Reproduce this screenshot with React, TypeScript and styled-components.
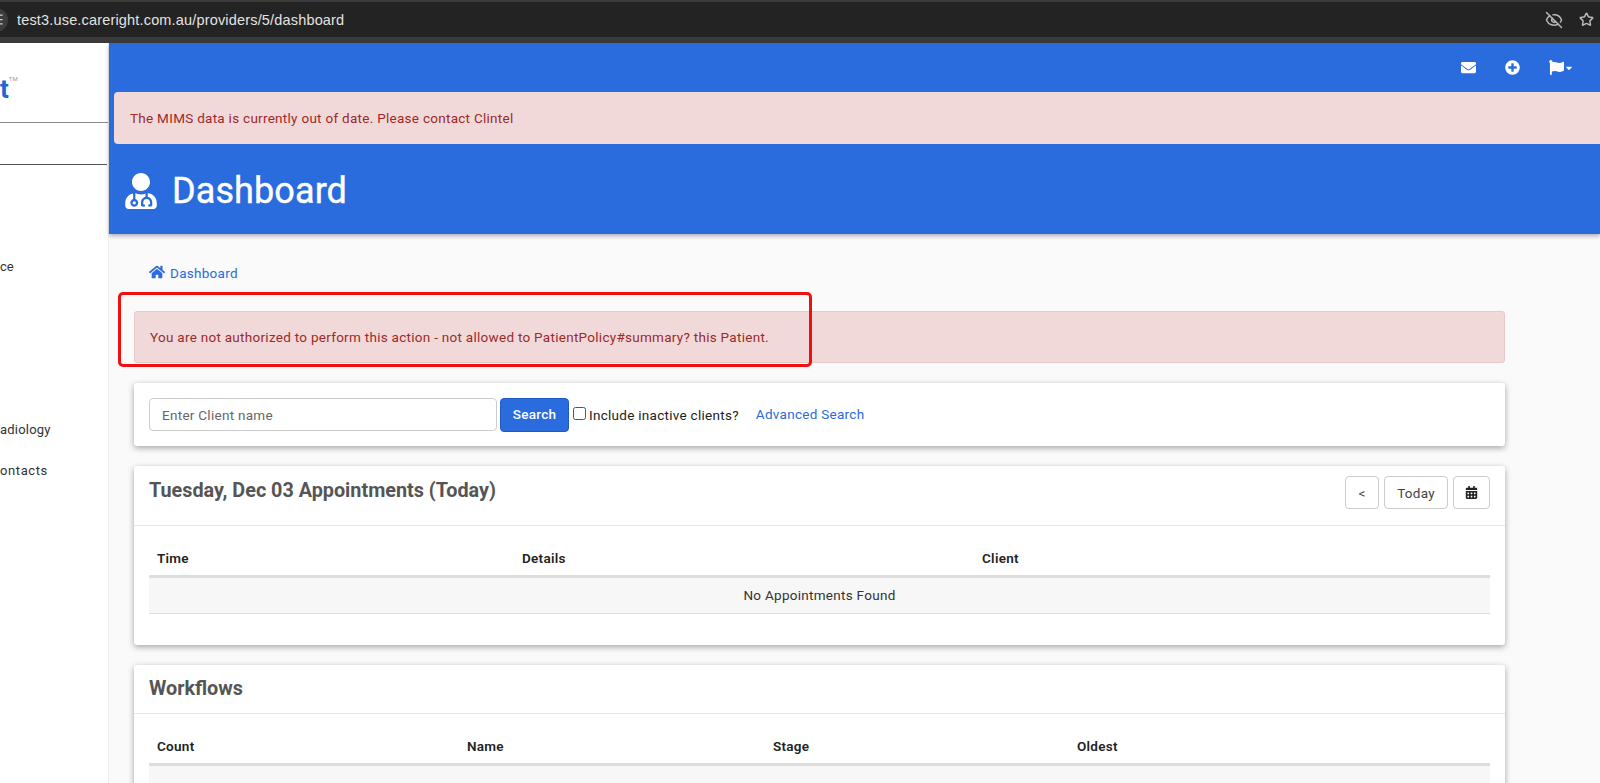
import React from "react";
import styled, { createGlobalStyle } from "styled-components";
import { FaUserMd, FaHome, FaPlusCircle, FaEnvelope, FaFlag, FaCalendarAlt, FaCaretDown } from "react-icons/fa";
import { EyeOff, Star, SlidersHorizontal } from "lucide-react";

const Global = createGlobalStyle`
  html, body { margin: 0; padding: 0; background: #fafafa; overflow: hidden; }
  * { box-sizing: border-box; }
`;

const Page = styled.div`
  width: 1600px; height: 783px; overflow: hidden; display: flex; flex-direction: column;
  font-family: Roboto, "Liberation Sans", sans-serif; font-size: 13.5px; letter-spacing: 0.28px; color: #222;
`;

const BrowserBar = styled.div`
  height: 43px; flex: none; display: flex; align-items: center; justify-content: space-between;
  background: #232323; border-top: 2px solid #3a3a3a; border-bottom: 6px solid #3a3a3a;
  color: #dcdcdc; padding-right: 6px;
`;
const UrlGroup = styled.div`display: flex; align-items: center; gap: 9px; margin-left: -16px;`;
const SiteBadge = styled.div`width: 24px; height: 24px; border-radius: 50%; background: #3c3c3c; display: flex; align-items: center; justify-content: center; color: #d0d0d0;`;
const Url = styled.span`font-family: "Liberation Sans", sans-serif; font-size: 14.5px; letter-spacing: 0.17px; color: #e2e2e2;`;
const BrowserIcons = styled.div`display: flex; align-items: center; gap: 16px; color: #b8b8b8;`;

const Body = styled.div`flex: 1; display: flex; min-height: 0;`;

const Sidebar = styled.aside`
  width: 109px; flex: none; background: #fff; display: flex; flex-direction: column; overflow: hidden;
  border-right: 1px solid #f0f0f0;
`;
const Logo = styled.div`
  height: 80px; flex: none; border-bottom: 1px solid #8a8a8a; padding-top: 33px;
  display: flex; align-items: flex-start; color: #1f66d6; font-size: 26px; font-weight: 700; line-height: 26px; letter-spacing: 0;
`;
const Tm = styled.sup`font-size: 6px; font-weight: 400; line-height: 6px; color: #999; margin-top: 0;`;
const SideBlank = styled.div`height: 42px; flex: none; border-bottom: 1px solid #555; margin-right: 1px;`;
const NavList = styled.nav`display: flex; flex-direction: column; padding-top: 81px;`;
const NavItem = styled.div<{ $gap?: number; $track?: number }>`
  height: 41px; display: flex; align-items: center; color: #333; font-size: 13px;
  letter-spacing: ${p => p.$track ?? 0.2}px; margin-top: ${p => p.$gap ?? 0}px;
`;

const Main = styled.main`flex: 1; min-width: 0; display: flex; flex-direction: column;`;
const Hero = styled.header`
  height: 191px; flex: none; background: #2a6bdd; color: #fff; box-shadow: 0 2px 4px rgba(0,0,0,.3);
  display: flex; flex-direction: column; position: relative; z-index: 1;
`;
const TopIcons = styled.div`height: 49px; flex: none; display: flex; align-items: center; justify-content: flex-end; gap: 29px; padding-right: 26px;`;
const FlagGroup = styled.span`display: flex; align-items: center;`;
const HeroAlert = styled.div`
  height: 52px; flex: none; margin-left: 5px; background: #f1d9d9; border-radius: 4px 0 0 4px;
  color: #9c2a2a; display: flex; align-items: center; padding-left: 16px;
`;
const TitleRow = styled.div`flex: 1; display: flex; align-items: center; gap: 13px; padding: 4px 0 0 14px;`;
const Title = styled.h1`margin: 0; font-size: 36px; font-weight: 400; letter-spacing: 0.1px; line-height: 42px; -webkit-text-stroke: 0.4px #fff;`;

const Content = styled.div`flex: 1; position: relative; background: #fafafa; padding: 0 95px 0 25px; display: flex; flex-direction: column;`;
const Crumb = styled.a`height: 77px; flex: none; padding: 30px 0 0 15px; display: flex; align-items: flex-start; gap: 5px; color: #2a6bdd; line-height: 18px;`;
const ContentAlert = styled.div`
  height: 52px; flex: none; background: #f1d9d9; border: 1px solid #e6c9c9; border-radius: 3px;
  color: #9c2a2a; display: flex; align-items: center; padding-left: 15px;
`;
const Highlight = styled.div`
  position: absolute; left: 9px; top: 58px; width: 694px; height: 75px;
  border: 3px solid #f20f0f; border-radius: 5px; pointer-events: none;
`;
const Card = styled.section<{ $h: number; $top: number }>`
  height: ${p => p.$h}px; margin-top: ${p => p.$top}px; flex: none; background: #fff; border-radius: 3px;
  box-shadow: 0 2px 6px rgba(0,0,0,.35);
`;
const SearchRow = styled.form`height: 100%; display: flex; align-items: center; padding-left: 15px;`;
const ClientInput = styled.input`
  width: 348px; height: 33px; border: 1px solid #ccc; border-radius: 4px; padding: 0 12px;
  font: 13.5px Roboto, sans-serif; letter-spacing: 0.28px; color: #555; &::placeholder { color: #666; opacity: 1; }
`;
const SearchButton = styled.button`
  margin-left: 3px; width: 69px; height: 34px; background: #2a6bdd; border: 1px solid #1f5bc4; border-radius: 4px;
  color: #fff; font: 500 13.5px Roboto, sans-serif; letter-spacing: 0.28px; padding: 0 0 2px;
`;
const Check = styled.input`width: 13px; height: 13px; margin: 0 3px 2px 4px; appearance: none; border: 1px solid #555; border-radius: 2.5px; background: #fff;`;
const CheckLabel = styled.label`display: flex; align-items: center; color: #222;`;
const AdvLink = styled.a`margin: 0 0 1px 17px; color: #2a6bdd;`;

const CardHead = styled.div<{ $h: number }>`
  height: ${p => p.$h}px; border-bottom: 1.5px solid #e8e8e8; display: flex; justify-content: space-between; align-items: flex-start; padding: 0 15px;
`;
const CardTitle = styled.h2<{ $top: number }>`margin: ${p => p.$top}px 0 0; font-size: 19.8px; font-weight: 700; color: #555; line-height: 24px; letter-spacing: 0;`;
const Tools = styled.div`display: flex; gap: 5px; padding-top: 10px;`;
const ToolBtn = styled.button<{ $w: number }>`
  width: ${p => p.$w}px; height: 33px; background: #fff; border: 1px solid #ccc; border-radius: 4px; color: #444;
  font: 13.5px Roboto, sans-serif; letter-spacing: 0.28px; display: flex; align-items: center; justify-content: center; padding: 0;
`;
const TableWrap = styled.div`padding: 0 15px;`;
const Table = styled.table`width: 100%; border-collapse: collapse; table-layout: fixed; font-size: 13.5px;`;
const Th = styled.th<{ $w: number }>`
  width: ${p => p.$w}px; height: 50px; padding: 16px 8px 0; text-align: left; font-weight: 600; color: #222;
  border-bottom: 3px solid #ddd;
`;
const EmptyCell = styled.td`height: 37px; background: #f7f7f7; border-bottom: 1px solid #ddd; text-align: center; color: #333;`;

export default function App() {
  return (
    <Page>
      <Global />
      <BrowserBar>
        <UrlGroup><SiteBadge><SlidersHorizontal size={15} /></SiteBadge><Url>test3.use.careright.com.au/providers/5/dashboard</Url></UrlGroup>
        <BrowserIcons><EyeOff size={18} /><Star size={15} strokeWidth={2.4} /></BrowserIcons>
      </BrowserBar>
      <Body>
        <Sidebar>
          <Logo>t<Tm>TM</Tm></Logo>
          <SideBlank />
          <NavList>
            <NavItem $track={0}>ce</NavItem>
            <NavItem $gap={122}>adiology</NavItem>
            <NavItem $track={0.6}>ontacts</NavItem>
          </NavList>
        </Sidebar>
        <Main>
          <Hero>
            <TopIcons>
              <FaEnvelope size={15} />
              <FaPlusCircle size={15} />
              <FlagGroup><FaFlag size={15} /><FaCaretDown size={10} /></FlagGroup>
            </TopIcons>
            <HeroAlert>The MIMS data is currently out of date. Please contact Clintel</HeroAlert>
            <TitleRow>
              <FaUserMd size={36} />
              <Title>Dashboard</Title>
            </TitleRow>
          </Hero>
          <Content>
            <Crumb><FaHome size={16} />Dashboard</Crumb>
            <ContentAlert>You are not authorized to perform this action - not allowed to PatientPolicy#summary? this Patient.</ContentAlert>
            <Highlight />
            <Card $h={63} $top={20}>
              <SearchRow>
                <ClientInput placeholder="Enter Client name" />
                <SearchButton type="button">Search</SearchButton>
                <CheckLabel><Check type="checkbox" />Include inactive clients?</CheckLabel>
                <AdvLink>Advanced Search</AdvLink>
              </SearchRow>
            </Card>
            <Card $h={179} $top={20}>
              <CardHead $h={60}>
                <CardTitle $top={13}>Tuesday, Dec 03 Appointments (Today)</CardTitle>
                <Tools>
                  <ToolBtn $w={34}>&lt;</ToolBtn>
                  <ToolBtn $w={64}>Today</ToolBtn>
                  <ToolBtn $w={37}><FaCalendarAlt size={13} color="#222" /></ToolBtn>
                </Tools>
              </CardHead>
              <TableWrap>
                <Table>
                  <thead><tr><Th $w={365}>Time</Th><Th $w={460}>Details</Th><Th $w={516}>Client</Th></tr></thead>
                  <tbody><tr><EmptyCell colSpan={3}>No Appointments Found</EmptyCell></tr></tbody>
                </Table>
              </TableWrap>
            </Card>
            <Card $h={179} $top={20}>
              <CardHead $h={49}>
                <CardTitle $top={12}>Workflows</CardTitle>
              </CardHead>
              <TableWrap>
                <Table>
                  <thead><tr><Th $w={310}>Count</Th><Th $w={306}>Name</Th><Th $w={304}>Stage</Th><Th $w={421}>Oldest</Th></tr></thead>
                  <tbody><tr><EmptyCell colSpan={4} /></tr></tbody>
                </Table>
              </TableWrap>
            </Card>
          </Content>
        </Main>
      </Body>
    </Page>
  );
}
